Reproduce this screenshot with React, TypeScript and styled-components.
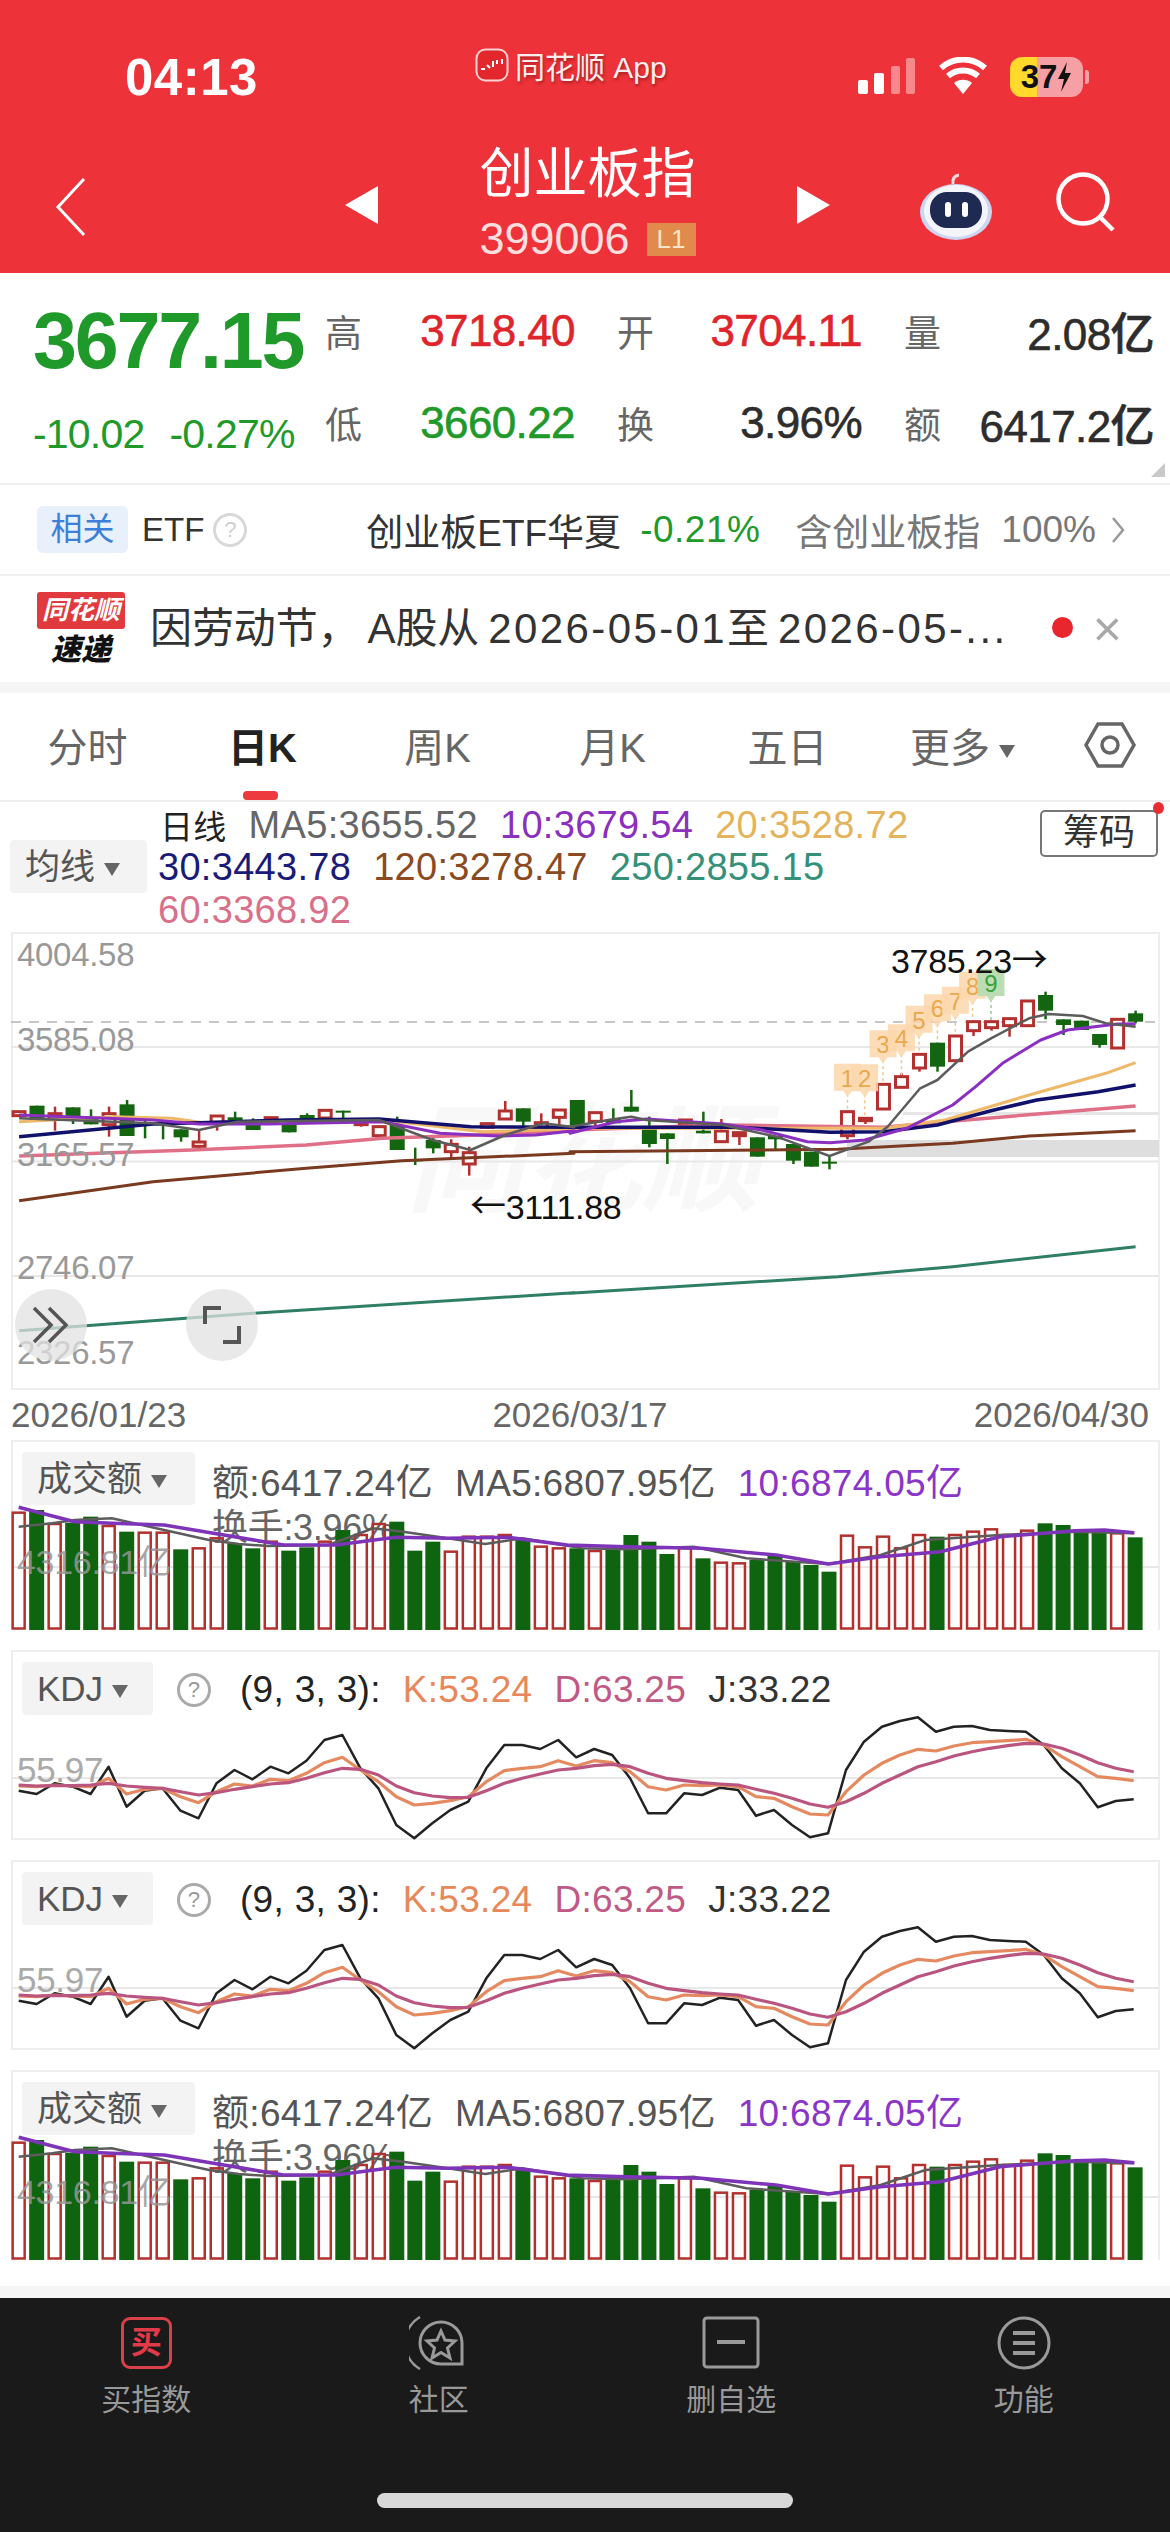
import React from "react";
import styled, { createGlobalStyle } from "styled-components";

const FONT = `"Liberation Sans", "Noto Sans CJK SC", sans-serif`;
const RED = "#e0242b";
const GREEN = "#1f9a2a";
const C_UP = "#b2302e";
const C_DOWN = "#14650f";

const GlobalStyle = createGlobalStyle`
  html, body { margin: 0; padding: 0; background: #fff; }
  body { font-family: ${FONT}; }
  * { box-sizing: border-box; }
`;

// ---- chart data. y values are kept in thirds of a pixel, like the grid of the source chart
type Pt = [number, number];
const stepX = (i: number) => 19 + 18.01 * i;
const mainY = (v: number) => 920 + v / 3;

// up, body top, body bottom, wick top, wick bottom
const candles: [boolean, number, number, number?, number?][] = [
  [true, 572, 590],
  [false, 557, 600],
  [true, 578, 600, 560, 632],
  [false, 562, 598, 562, 612],
  [false, 590, 613, 568, 613],
  [true, 578, 617, 560, 650],
  [false, 553, 648, 540, 648],
  [false, 606, 611, 600, 655],
  [false, 610, 614, 606, 658],
  [false, 628, 652, 628, 665],
  [true, 663, 682, 632, 692],
  [true, 585, 610, 585, 632],
  [false, 592, 600, 575, 605],
  [false, 600, 630, 595, 630],
  [true, 590, 610],
  [false, 610, 637],
  [false, 585, 600, 580, 600],
  [true, 568, 597],
  [false, 572, 578, 572, 597],
  [true, 605, 612, 595, 620],
  [true, 617, 650],
  [false, 615, 690, 590, 690],
  [false, 718, 722, 683, 735],
  [false, 660, 685, 650, 700],
  [true, 670, 698, 658, 718],
  [true, 695, 735, 680, 767],
  [true, 608, 625],
  [true, 570, 600, 543, 600],
  [false, 565, 605, 565, 622],
  [true, 605, 625, 580, 625],
  [true, 567, 595, 567, 615],
  [false, 540, 615],
  [true, 575, 607, 575, 630],
  [false, 597, 610, 565, 610],
  [false, 560, 575, 510, 575],
  [false, 627, 672, 590, 682],
  [false, 640, 657, 640, 732],
  [true, 597, 617],
  [false, 632, 640, 575, 640],
  [true, 630, 668, 597, 668],
  [true, 635, 650, 635, 675],
  [false, 652, 710],
  [false, 648, 658, 648, 688],
  [false, 672, 722, 672, 732],
  [false, 695, 740],
  [false, 725, 731, 708, 748],
  [true, 572, 650, 572, 658],
  [true, 592, 605, 592, 612],
  [true, 490, 570],
  [true, 467, 505, 460, 505],
  [true, 400, 447, 400, 455],
  [false, 368, 440, 368, 455],
  [true, 345, 425],
  [true, 302, 335, 302, 348],
  [true, 302, 326, 302, 332],
  [true, 293, 320, 293, 350],
  [true, 240, 320],
  [false, 225, 272, 215, 298],
  [false, 298, 315, 298, 345],
  [false, 302, 330],
  [false, 342, 375, 342, 383],
  [true, 295, 387],
  [false, 280, 305, 272, 310],
];

// the main chart lines come as two halves, left part from x=0 and right part from x=570
const half = (left: Pt[], right: Pt[]): string =>
  [
    ...left.map(([x, y]) => [x / 2.613, mainY(y)]),
    ...right.map(([x, y]) => [x / 2.613 + 570, mainY(y)]),
  ]
    .map((p) => p.map((n) => n.toFixed(1)).join(","))
    .join(" ");

const maLines: { color: string; width: number; points: string }[] = [
  {
    color: "#2f7f63",
    width: 3,
    points: half(
      [[50, 1232], [660, 1180], [1500, 1118]],
      [[0, 1120], [700, 1070], [1000, 1040], [1478, 980]]
    ),
  },
  {
    color: "#7a3a20",
    width: 3,
    points: half(
      [[50, 842], [400, 785], [800, 745], [1050, 722], [1500, 700]],
      [[0, 695], [700, 688], [1000, 670], [1200, 648], [1478, 632]]
    ),
  },
  {
    color: "#e07088",
    width: 3.5,
    points: half(
      [[50, 708], [500, 690], [800, 675], [1000, 655], [1250, 645], [1500, 632]],
      [[0, 630], [400, 615], [820, 622], [980, 605], [1478, 558]]
    ),
  },
  {
    color: "#eeb868",
    width: 3,
    points: half(
      [[50, 605], [300, 590], [450, 595], [540, 610], [800, 600], [1000, 600], [1260, 635], [1500, 627]],
      [[0, 625], [500, 625], [820, 625], [980, 600], [1200, 525], [1400, 460], [1478, 428]]
    ),
  },
  {
    color: "#11116b",
    width: 3.5,
    points: half(
      [[50, 650], [400, 612], [520, 608], [750, 600], [990, 597], [1230, 620], [1500, 622]],
      [[0, 622], [440, 622], [680, 637], [820, 635], [960, 615], [1100, 572], [1220, 540], [1380, 515], [1478, 495]]
    ),
  },
  {
    color: "#8a2fc0",
    width: 3,
    points: half(
      [[50, 585], [400, 600], [520, 612], [700, 612], [1000, 605], [1150, 640], [1300, 648], [1400, 645], [1500, 632]],
      [[0, 640], [120, 605], [200, 597], [400, 612], [500, 630], [620, 665], [680, 668], [770, 660], [880, 625], [1000, 555], [1060, 500], [1130, 430], [1230, 360], [1300, 330], [1430, 312], [1478, 312]]
    ),
  },
  {
    color: "#5c5c5c",
    width: 2.5,
    points: half(
      [[50, 595], [400, 610], [520, 630], [620, 605], [990, 600], [1060, 630], [1130, 660], [1230, 690], [1320, 645], [1420, 610], [1500, 622]],
      [[0, 620], [100, 600], [160, 590], [200, 600], [400, 615], [540, 650], [678, 708], [780, 665], [830, 620], [915, 505], [960, 480], [1040, 395], [1100, 355], [1200, 295], [1250, 282], [1340, 288], [1400, 310], [1478, 320]]
    ),
  },
];

// nine-turn markers: digit, centre x, centre y, tip y, in source units
const turns: [string, number, number, number][] = [
  ["1", 725, 476, 570],
  ["2", 770, 478, 590],
  ["3", 818, 376, 488],
  ["4", 866, 358, 465],
  ["5", 912, 302, 398],
  ["6", 960, 268, 366],
  ["7", 1007, 245, 343],
  ["8", 1052, 200, 300],
  ["9", 1100, 192, 300],
];

const volPattern = "RGRGGRGRRGRRGGRGGRGRRGGGRRRRGRRGRGGGGRGRRGGGGGRRRRRGRRRRRGGGGRG";
const volTops = [
  278, 270, 312, 308, 290, 318, 335, 338, 338, 388, 385, 355, 370, 385, 365, 392, 382, 365, 330, 345, 312,
  305, 392, 365, 395, 350, 350, 345, 360, 380, 385, 385, 393, 388, 345, 365, 402, 385, 415, 428, 430, 420,
  405, 425, 435, 455, 347, 382, 350, 385, 345, 350, 345, 335, 328, 345, 332, 310, 315, 335, 330, 340, 352,
];

const panelPath = (xs: Pt[]) =>
  xs.map(([x, y]) => `${(x / 1.34).toFixed(1)},${(1420 + y / 3).toFixed(1)}`).join(" ");

const volPurple: Pt[] = [[25, 262], [100, 305], [150, 310], [220, 315], [300, 345], [380, 375], [450, 375], [530, 352], [600, 355], [680, 352], [760, 375], [840, 380], [940, 385], [1040, 405], [1110, 432], [1180, 410], [1260, 395], [1340, 350], [1440, 332], [1480, 330], [1520, 338]];
const volGray: Pt[] = [[25, 320], [70, 310], [100, 300], [150, 295], [220, 330], [280, 360], [320, 372], [360, 378], [440, 375], [500, 325], [540, 335], [600, 355], [650, 372], [700, 355], [780, 385], [840, 388], [930, 380], [1000, 415], [1110, 432], [1180, 405], [1240, 360], [1340, 345], [1440, 335], [1520, 340]];

const kdjX = (i: number) => 25 + 24.1 * i;
const toPts = (ys: number[]): Pt[] => ys.map((y, i) => [kdjX(i), y]);
const kdjJ = toPts([1112, 1122, 1090, 1100, 1122, 1040, 1160, 1112, 1105, 1172, 1195, 1090, 1050, 1078, 1040, 1060, 1022, 960, 945, 1045, 1105, 1215, 1255, 1210, 1170, 1145, 1045, 975, 975, 987, 960, 1012, 987, 1005, 1075, 1180, 1180, 1120, 1125, 1103, 1110, 1187, 1170, 1215, 1252, 1240, 1050, 965, 920, 903, 892, 935, 920, 918, 930, 933, 935, 975, 1045, 1090, 1162, 1143, 1138]);
const kdjK = toPts([1098, 1100, 1095, 1098, 1100, 1075, 1122, 1108, 1105, 1130, 1148, 1115, 1092, 1098, 1078, 1082, 1060, 1028, 1012, 1050, 1085, 1130, 1155, 1150, 1142, 1130, 1085, 1052, 1045, 1040, 1022, 1038, 1022, 1028, 1055, 1100, 1110, 1095, 1097, 1095, 1100, 1130, 1135, 1160, 1182, 1185, 1115, 1065, 1030, 1005, 988, 993, 978, 968, 965, 962, 958, 975, 1010, 1040, 1070, 1075, 1082]);
const kdjD = toPts([1095, 1098, 1097, 1097, 1095, 1090, 1098, 1102, 1105, 1115, 1125, 1118, 1108, 1100, 1092, 1088, 1075, 1058, 1045, 1048, 1065, 1098, 1118, 1128, 1133, 1132, 1112, 1090, 1075, 1062, 1050, 1045, 1037, 1033, 1040, 1060, 1075, 1082, 1088, 1092, 1095, 1108, 1120, 1135, 1152, 1162, 1145, 1120, 1090, 1065, 1040, 1025, 1008, 995, 985, 977, 970, 972, 985, 1005, 1028, 1045, 1055]);

// ---- page
const Page = styled.div`
  width: 1170px;
  height: 2532px;
  overflow: hidden;
  display: flex;
  flex-direction: column;
  background: #fff;
`;

const Header = styled.header`
  height: 273px;
  background: #ee3239;
  color: #fff;
`;

const StatusBar = styled.div`
  height: 120px;
  display: grid;
  grid-template-columns: 340px 1fr 340px;
  padding: 0 87px 0 125px;
`;

const Time = styled.div`
  display: flex;
  align-items: center;
  padding-top: 34px;
  font-size: 51px;
  font-weight: 700;
  letter-spacing: 0.5px;
`;

const AppLabel = styled.div`
  display: flex;
  align-items: center;
  gap: 6px;
  padding-top: 10px;
  margin-left: 10px;
  font-size: 30px;
  color: #fdeeee;
  text-shadow: 1px 2px 3px rgba(110, 20, 20, 0.6);
  white-space: nowrap;
`;

const StatusIcons = styled.div`
  display: flex;
  align-items: flex-start;
  justify-content: flex-end;
  padding-top: 57px;
  gap: 22px;
`;

const Battery = styled.div`
  position: relative;
  width: 73px;
  height: 40px;
  border-radius: 12px;
  display: flex;
  align-items: center;
  justify-content: center;
  background: linear-gradient(90deg, #ffd92c 0 37%, #f6a0a6 37%);
  color: #111;
  font-size: 33px;
  font-weight: 700;
`;

const BatteryNub = styled.span`
  position: absolute;
  right: -6px;
  top: 13px;
  width: 4px;
  height: 14px;
  border-radius: 0 3px 3px 0;
  background: #f6a0a6;
`;

const NavRow = styled.div`
  height: 153px;
  display: grid;
  grid-template-columns: 345px 485px 1fr;
`;

const BackCell = styled.div`
  padding: 57px 0 0 55px;
`;

const TitleCell = styled.div`
  display: flex;
  align-items: flex-start;
  justify-content: space-between;
  padding-top: 22px;
`;

const ArrowBox = styled.div`
  margin-top: 44px;
`;

const TitleStack = styled.div`
  display: flex;
  flex-direction: column;
  align-items: center;
`;

const Title = styled.div`
  font-size: 54px;
  line-height: 64px;
`;

const CodeRow = styled.div`
  display: flex;
  align-items: center;
  gap: 17px;
  font-size: 45px;
  line-height: 44px;
  margin-top: 11px;
  color: #fbdfdf;
`;

const LevelBadge = styled.span`
  width: 49px;
  height: 33px;
  background: #e08a4c;
  color: #f6e6c8;
  font-size: 26px;
  line-height: 33px;
  text-align: center;
`;

const ToolCell = styled.div`
  display: flex;
  justify-content: flex-end;
  gap: 62px;
  padding: 52px 55px 0 0;
`;

const Quote = styled.section`
  height: 210px;
  display: grid;
  grid-template-columns: 292px 1fr;
  padding: 35px 16px 0 33px;
  position: relative;
`;

const PriceBlock = styled.div`
  display: flex;
  flex-direction: column;
`;

const Price = styled.div`
  font-size: 79px;
  font-weight: 700;
  line-height: 66px;
  letter-spacing: -2.2px;
  color: ${GREEN};
`;

const Change = styled.div`
  display: flex;
  gap: 25px;
  margin-top: 40px;
  font-size: 41px;
  line-height: 40px;
  letter-spacing: -0.8px;
  color: ${GREEN};
`;

const StatsGrid = styled.div`
  display: grid;
  grid-template-columns: 250px 245px 250px;
  column-gap: 42px;
  row-gap: 46px;
  grid-auto-rows: 46px;
`;

const Stat = styled.div`
  display: flex;
  align-items: center;
  justify-content: space-between;
  white-space: nowrap;
`;

const StatLabel = styled.span`
  font-size: 37px;
  color: #666;
`;

const StatValue = styled.span<{ $c?: string }>`
  font-size: 44px;
  font-weight: 500;
  letter-spacing: -0.6px;
  -webkit-text-stroke: 0.6px ${(p) => p.$c || "#2d2d2d"};
  color: ${(p) => p.$c || "#2d2d2d"};
`;

const Corner = styled.div`
  position: absolute;
  right: 5px;
  bottom: 6px;
  width: 0;
  height: 0;
  border-left: 14px solid transparent;
  border-bottom: 14px solid #c9c9c9;
`;

const Related = styled.section`
  height: 91px;
  border-top: 2px solid #f0f0f0;
  display: flex;
  align-items: center;
  padding: 0 45px 0 37px;
  font-size: 37px;
  white-space: nowrap;
`;

const RelatedPill = styled.span`
  width: 91px;
  height: 47px;
  background: #e8f0fb;
  border-radius: 6px;
  color: #3c7fd8;
  font-size: 32px;
  line-height: 47px;
  text-align: center;
`;

const EtfLabel = styled.span`
  margin-left: 14px;
  font-size: 33px;
  color: #333;
`;

const HelpMark = styled.span<{ $size?: number }>`
  width: ${(p) => p.$size || 34}px;
  height: ${(p) => p.$size || 34}px;
  margin-left: 9px;
  border: 3px solid #d8d8d8;
  border-radius: 50%;
  color: #cfcfcf;
  font-size: 22px;
  line-height: 28px;
  text-align: center;
`;

const PanelHelp = styled(HelpMark)`
  margin-left: 24px;
  margin-right: 7px;
  border-color: #aaa;
  color: #999;
`;

const FundName = styled.span`
  margin-left: auto;
  color: #333;
`;

const FundPct = styled.span`
  margin-left: 19px;
  letter-spacing: 0.5px;
  color: ${GREEN};
`;

const HoldLabel = styled.span`
  margin-left: 35px;
  color: #777;
`;

const HoldPct = styled.span`
  margin-left: 21px;
  margin-right: 15px;
  color: #777;
`;

const News = styled.section`
  height: 108px;
  border-top: 2px solid #f0f0f0;
  display: flex;
  align-items: center;
  padding: 0 48px 0 37px;
`;

const NewsLogo = styled.div`
  width: 88px;
  display: flex;
  flex-direction: column;
  align-items: center;
`;

const NewsTag = styled.span`
  width: 88px;
  height: 37px;
  background: #e03a3e;
  border-radius: 3px;
  color: #fff;
  font-size: 26px;
  font-weight: 700;
  font-style: italic;
  line-height: 37px;
  text-align: center;
`;

const NewsSub = styled.span`
  margin-top: 5px;
  font-size: 30px;
  line-height: 32px;
  font-weight: 900;
  font-style: italic;
  color: #111;
`;

const NewsText = styled.div`
  margin-left: 25px;
  padding-bottom: 9px;
  flex: 1;
  font-size: 42px;
  letter-spacing: -0.1px;
  color: #333;
  white-space: nowrap;
`;

const NewsMarket = styled.span`
  margin-left: 8px;
`;

const NewsDate = styled.span`
  letter-spacing: 2.4px;
  margin-left: 9px;
`;

const NewsDot = styled.span`
  width: 21px;
  height: 21px;
  margin-bottom: 3px;
  border-radius: 50%;
  background: #e8262e;
`;

const NewsClose = styled.span`
  margin-left: 20px;
  font-size: 50px;
  line-height: 42px;
  color: #a8a8a8;
`;

const Band = styled.div<{ $h: number }>`
  height: ${(p) => p.$h}px;
  background: #f5f5f5;
`;

const Tabs = styled.nav`
  height: 109px;
  border-bottom: 2px solid #eee;
  display: grid;
  grid-template-columns: repeat(6, 175px) 1fr;
  align-items: center;

  & > svg {
    justify-self: center;
    margin-top: -4px;
  }
`;

const Tab = styled.div<{ $on?: boolean }>`
  position: relative;
  height: 107px;
  line-height: 110px;
  text-align: center;
  font-size: 40px;
  color: ${(p) => (p.$on ? "#222" : "#666")};
  font-weight: ${(p) => (p.$on ? 700 : 400)};
`;

const TabMark = styled.span`
  position: absolute;
  left: 68px;
  bottom: 0;
  width: 35px;
  height: 9px;
  background: #ec3a3f;
  border-radius: 4px;
`;

const Caret = styled.span<{ $c?: string }>`
  display: inline-block;
  width: 0;
  height: 0;
  margin-left: 9px;
  vertical-align: middle;
  border-left: 8px solid transparent;
  border-right: 8px solid transparent;
  border-top: 13px solid ${(p) => p.$c || "#666"};
`;

const Legend = styled.section`
  height: 130px;
  display: flex;
  padding: 2px 12px 0 10px;
`;

const SelectBox = styled.div<{ $w: number }>`
  width: ${(p) => p.$w}px;
  height: 53px;
  background: #f3f3f3;
  border-radius: 4px;
  color: #555;
  font-size: 35px;
  line-height: 53px;
  padding-left: 15px;
  white-space: nowrap;
`;

const LegendSelect = styled(SelectBox)`
  align-self: center;
  margin-right: 11px;
  margin-top: -4px;
`;

const LegendLines = styled.div`
  display: flex;
  flex-direction: column;
`;

const LegendLine = styled.div`
  height: 42.5px;
  display: flex;
  align-items: center;
  gap: 22px;
  font-size: 38px;
  letter-spacing: 0.3px;
  white-space: nowrap;
`;

const LegendTitle = styled.span`
  font-size: 33px;
  margin-left: 2px;
  color: #222;
`;

const Reading = styled.span<{ $c: string }>`
  color: ${(p) => p.$c};
`;

const ChipButton = styled.div`
  position: relative;
  width: 118px;
  height: 47px;
  margin: 6px 0 0 auto;
  border: 2px solid #777;
  border-radius: 5px;
  font-size: 36px;
  line-height: 42px;
  text-align: center;
  color: #333;
`;

const ChipDot = styled.span`
  position: absolute;
  top: -10px;
  right: -8px;
  width: 11px;
  height: 12px;
  border-radius: 50%;
  background: #ea2b33;
`;

const MainChart = styled.div`
  position: relative;
  width: 1149px;
  height: 458px;
  margin-left: 11px;
  box-shadow: inset 0 0 0 2px #eee;
`;

const Plot = styled.svg`
  position: relative;
  display: block;
  width: 100%;
  height: 100%;
`;

const AxisLabel = styled.span<{ $y: number; $left?: number; $c?: string; $size?: number }>`
  position: absolute;
  left: ${(p) => p.$left ?? 6}px;
  top: ${(p) => p.$y}px;
  font-size: ${(p) => p.$size ?? 33}px;
  line-height: 34px;
  letter-spacing: -0.3px;
  color: ${(p) => p.$c || "#999"};
  white-space: nowrap;
`;

const Extreme = styled.span<{ $x: number; $y: number }>`
  position: absolute;
  left: ${(p) => p.$x}px;
  top: ${(p) => p.$y}px;
  font-size: 34px;
  line-height: 36px;
  letter-spacing: -0.3px;
  color: #111;
  white-space: nowrap;
`;

const ExtremeArrow = styled.span`
  font-family: "Noto Sans CJK SC", sans-serif;
  font-size: 36px;
`;

const Watermark = styled.span`
  position: absolute;
  left: 395px;
  top: 170px;
  font-size: 118px;
  line-height: 118px;
  font-weight: 700;
  font-style: italic;
  color: #f8f8f8;
`;

const RoundButton = styled.span<{ $x: number }>`
  position: absolute;
  left: ${(p) => p.$x}px;
  top: 357px;
  width: 72px;
  height: 72px;
  border-radius: 50%;
  background: rgba(226, 226, 226, 0.75);
  display: flex;
  align-items: center;
  justify-content: center;
`;

const Dates = styled.div`
  height: 50px;
  display: flex;
  align-items: center;
  justify-content: space-between;
  padding: 0 21px 0 11px;
  font-size: 35px;
  color: #666;
`;

const Panels = styled.div`
  display: flex;
  flex-direction: column;
  gap: 20px;
  margin-left: 11px;
`;

const Panel = styled.div<{ $closed?: boolean }>`
  position: relative;
  width: 1149px;
  height: 190px;
  box-shadow: inset 0 2px 0 #eee, inset 2px 0 0 #eee, inset -2px 0 0 #eee
    ${(p) => (p.$closed ? ", inset 0 -2px 0 #eee" : "")};
`;

const PanelHead = styled.div`
  position: absolute;
  left: 11px;
  top: 12px;
  display: flex;
  align-items: flex-start;
`;

const PanelReadings = styled.div<{ $indent?: number }>`
  display: flex;
  align-items: center;
  height: 56px;
  margin-left: ${(p) => p.$indent ?? 0}px;
  gap: 22px;
  font-size: 37px;
  letter-spacing: 0.3px;
  white-space: nowrap;
`;

const Footer = styled.div`
  margin-top: 26px;
`;

const BottomNav = styled.nav`
  height: 234px;
  background: #1a1a1a;
  display: grid;
  grid-template-columns: repeat(4, 1fr);
  grid-template-rows: 126px 1fr;
`;

const NavItem = styled.div`
  display: flex;
  flex-direction: column;
  align-items: center;
  padding-top: 18px;
  color: #999;
  font-size: 30px;
  line-height: 34px;
`;

const NavIconBox = styled.div`
  height: 53px;
  margin-bottom: 14px;
  display: flex;
  align-items: center;
`;

const BuyIcon = styled.div`
  width: 51px;
  height: 52px;
  border: 3px solid #d8404a;
  border-radius: 9px;
  color: #e23a48;
  font-size: 31px;
  font-weight: 700;
  line-height: 45px;
  text-align: center;
`;

const HomeLine = styled.div`
  grid-column: 1 / -1;
  justify-self: center;
  margin-top: 69px;
  width: 416px;
  height: 15px;
  border-radius: 8px;
  background: #d8d8d8;
`;

// ---- drawn icons
const Signal = () => (
  <svg width="60" height="38" viewBox="0 0 60 38">
    <rect x="2" y="23" width="10" height="14" rx="2" fill="#fff" />
    <rect x="18" y="16" width="10" height="21" rx="2" fill="#fff" />
    <rect x="35" y="9" width="9" height="28" rx="2" fill="#f7888c" />
    <rect x="50" y="1" width="9" height="36" rx="2" fill="#f7888c" />
  </svg>
);

const Wifi = () => (
  <svg width="50" height="38" viewBox="0 0 50 38">
    <path d="M25 37 L16 26 a14 14 0 0 1 18 0 Z" fill="#fff" />
    <path d="M10 19 a23 23 0 0 1 30 0" fill="none" stroke="#fff" strokeWidth="6" />
    <path d="M3 11 a33 33 0 0 1 44 0" fill="none" stroke="#fff" strokeWidth="6" />
  </svg>
);

const Bolt = () => (
  <svg width="15" height="30" viewBox="0 0 15 30">
    <path d="M10 0 L1 17 H7 L4 30 L14 11 H8 Z" fill="#111" />
  </svg>
);

const AppIcon = () => (
  <svg width="34" height="34" viewBox="0 0 34 34">
    <rect x="1.5" y="1.5" width="31" height="31" rx="9" fill="#e2272d" stroke="#fbd3d3" strokeWidth="2" />
    <path d="M6 21 h4 M12 17 l3 3 M18 13 v6 M22 12 v4 M27 11 v5" stroke="#fff" strokeWidth="2" />
  </svg>
);

const Back = () => (
  <svg width="32" height="60" viewBox="0 0 32 60">
    <path d="M29 2 L3 30 L29 58" fill="none" stroke="#fff" strokeWidth="3" />
  </svg>
);

const Arrow = ({ right }: { right?: boolean }) => (
  <ArrowBox>
    <svg width="33" height="38" viewBox="0 0 33 38">
      <path d={right ? "M0 0 L33 19 L0 38 Z" : "M33 0 L0 19 L33 38 Z"} fill="#fff" />
    </svg>
  </ArrowBox>
);

const Robot = () => (
  <svg width="73" height="68" viewBox="0 0 73 68">
    <path d="M33 12 q-1 -8 6 -9" fill="none" stroke="#f6d8dc" strokeWidth="3" />
    <ellipse cx="36" cy="40" rx="36" ry="28" fill="#ccd6f2" />
    <ellipse cx="36" cy="39" rx="32" ry="26" fill="#f4f5fb" />
    <rect x="10" y="20" width="52" height="36" rx="17" fill="#1e2a52" />
    <rect x="25" y="30" width="6" height="15" rx="3" fill="#fff" />
    <rect x="42" y="30" width="6" height="15" rx="3" fill="#fff" />
  </svg>
);

const Search = () => (
  <svg width="60" height="60" viewBox="0 0 60 60">
    <circle cx="28" cy="27" r="24.5" fill="none" stroke="#fff" strokeWidth="4.5" />
    <path d="M45 45 L58 58" stroke="#fff" strokeWidth="4.5" />
  </svg>
);

const HexIcon = () => (
  <svg width="52" height="46" viewBox="0 0 52 46">
    <path d="M14 2 H38 L50 23 L38 44 H14 L2 23 Z" fill="none" stroke="#666" strokeWidth="3.5" />
    <circle cx="26" cy="23" r="8" fill="none" stroke="#666" strokeWidth="3.5" />
  </svg>
);

const SmallChevron = () => (
  <svg width="14" height="28" viewBox="0 0 14 28">
    <path d="M2 2 L12 14 L2 26" fill="none" stroke="#999" strokeWidth="2.5" />
  </svg>
);

const DoubleChevron = () => (
  <svg width="40" height="40" viewBox="0 0 40 40">
    <path d="M3 3 L20 20 L3 37 M18 3 L35 20 L18 37" fill="none" stroke="#555" strokeWidth="3.5" />
  </svg>
);

const Expand = () => (
  <svg width="38" height="38" viewBox="0 0 38 38">
    <path d="M2 18 V2 H18 M36 20 V36 H20" fill="none" stroke="#555" strokeWidth="4" />
  </svg>
);

const CommunityIcon = () => (
  <svg width="60" height="54" viewBox="0 0 60 54">
    <path d="M11 1 a30 30 0 0 0 0 52" fill="none" stroke="#9a9a9a" strokeWidth="2.5" />
    <path d="M32 6 a21 21 0 0 1 21 21 V48 H32 a21 21 0 0 1 0 -42 Z" fill="none" stroke="#9a9a9a" strokeWidth="3" />
    <path d="M32 15 l4 9 10 1 -7.5 7 2.5 10 -9 -5.5 -9 5.5 2.5 -10 -7.5 -7 10 -1 Z" fill="none" stroke="#9a9a9a" strokeWidth="3" />
  </svg>
);

const UnfollowIcon = () => (
  <svg width="58" height="53" viewBox="0 0 58 53">
    <rect x="2" y="2" width="54" height="49" rx="3" fill="none" stroke="#9a9a9a" strokeWidth="3" />
    <path d="M15 26 H43" stroke="#9a9a9a" strokeWidth="4" />
  </svg>
);

const MenuIcon = () => (
  <svg width="54" height="54" viewBox="0 0 54 54">
    <circle cx="27" cy="27" r="25" fill="none" stroke="#9a9a9a" strokeWidth="3" />
    <path d="M16 17 H38 M16 27 H38 M16 37 H38" stroke="#9a9a9a" strokeWidth="4" />
  </svg>
);

// ---- chart parts
const CandleChart = () => (
  <Plot viewBox="11 932 1149 458">
    <path d="M11 1047 H1159 M11 1161.5 H1159 M11 1276 H1159" stroke="#e8e8e8" strokeWidth="2" />
    <path d="M11 1022 H1159" stroke="#b5b5b5" strokeWidth="1.5" strokeDasharray="10 8" />
    <rect x="847" y="1140" width="312" height="17" fill="#dedede" />
    <rect x="903" y="1112" width="256" height="3" fill="#e6e6e6" />
    {candles.map(([up, top, bottom, wTop, wBottom], i) => {
      const x = stepX(i);
      const c = up ? C_UP : C_DOWN;
      const y1 = mainY(top);
      const y2 = mainY(bottom);
      return (
        <g key={i}>
          <path d={`M${x} ${mainY(wTop ?? top)} V${mainY(wBottom ?? bottom)}`} stroke={c} strokeWidth="2.5" />
          <rect
            x={x - (up ? 6 : 7.5)}
            y={up ? y1 + 1 : y1}
            width={up ? 12 : 15}
            height={Math.max(up ? y2 - y1 - 2 : y2 - y1, 2)}
            fill={up ? "#fff" : c}
            stroke={up ? c : "none"}
            strokeWidth="3"
          />
        </g>
      );
    })}
    {maLines.map((l) => (
      <polyline key={l.color} points={l.points} fill="none" stroke={l.color} strokeWidth={l.width} strokeLinejoin="round" />
    ))}
    {turns.map(([digit, zx, zy, tip]) => {
      const x = zx / 2.613 + 570;
      const y = mainY(zy);
      const isNine = digit === "9";
      const fill = isNine ? "#bcdcb4" : "#fbd7ac";
      return (
        <g key={digit}>
          <path d={`M${x} ${y + 15} V${mainY(tip)}`} stroke={isNine ? "#9cc89a" : "#f3c48e"} strokeWidth="1.5" strokeDasharray="3 3" />
          <path
            d={`M${x - 13.5} ${y - 15} h27 v27 l-9 0 -4.5 6 -4.5 -6 h-9 Z`}
            fill={fill}
            fillOpacity={isNine ? 1 : 0.85}
          />
          <text x={x} y={y + 8} textAnchor="middle" fontSize="24" fill={isNine ? "#35a33a" : "#eaa84e"} fontFamily="Liberation Sans">
            {digit}
          </text>
        </g>
      );
    })}
  </Plot>
);

const VolumeChart = () => (
  <Plot viewBox="11 1440 1149 190">
    <path d="M11 1567 H1159" stroke="#e8e8e8" strokeWidth="2" />
    {volTops.map((t, i) => {
      const x = (25 + 24.13 * i) / 1.34;
      const y = 1420 + t / 3;
      const up = volPattern[i] === "R";
      return up ? (
        <rect key={i} x={x - 6} y={y} width="12" height={1628.5 - y} fill="#fff" fillOpacity="0" stroke={C_UP} strokeWidth="2.5" />
      ) : (
        <rect key={i} x={x - 7.5} y={y} width="15" height={1630 - y} fill="#0f650f" />
      );
    })}
    <polyline points={panelPath(volGray)} fill="none" stroke="#5c5c5c" strokeWidth="2.5" />
    <polyline points={panelPath(volPurple)} fill="none" stroke="#7e34b8" strokeWidth="3.5" strokeLinejoin="round" />
  </Plot>
);

const KdjChart = () => (
  <Plot viewBox="11 1650 1149 190">
    <path d="M11 1778 H1159" stroke="#e8e8e8" strokeWidth="2" />
    <polyline points={panelPath(kdjJ)} fill="none" stroke="#222" strokeWidth="2.5" strokeLinejoin="round" />
    <polyline points={panelPath(kdjK)} fill="none" stroke="#e58a60" strokeWidth="3.2" strokeLinejoin="round" />
    <polyline points={panelPath(kdjD)} fill="none" stroke="#b9557f" strokeWidth="3.2" strokeLinejoin="round" />
  </Plot>
);

const VolumePanel = () => (
  <Panel>
    <AxisLabel $left={201} $y={71} $c="#666" $size={36}>换手:3.96%</AxisLabel>
    <VolumeChart />
    <AxisLabel $y={105} $c="rgba(150,150,150,0.85)" $size={34}>4316.81亿</AxisLabel>
    <PanelHead>
      <SelectBox $w={173}>成交额<Caret $c="#666" /></SelectBox>
      <PanelReadings $indent={17}>
        <Reading $c="#555">额:6417.24亿</Reading>
        <Reading $c="#555">MA5:6807.95亿</Reading>
        <Reading $c="#8a35c8">10:6874.05亿</Reading>
      </PanelReadings>
    </PanelHead>
  </Panel>
);

const KdjPanel = () => (
  <Panel $closed>
    <KdjChart />
    <AxisLabel $y={103} $c="#aaa" $size={35}>55.97</AxisLabel>
    <PanelHead>
      <SelectBox $w={131}>KDJ<Caret $c="#666" /></SelectBox>
      <PanelReadings>
        <PanelHelp>?</PanelHelp>
        <Reading $c="#222">(9, 3, 3):</Reading>
        <Reading $c="#e8875a">K:53.24</Reading>
        <Reading $c="#c05a85">D:63.25</Reading>
        <Reading $c="#333">J:33.22</Reading>
      </PanelReadings>
    </PanelHead>
  </Panel>
);

const App: React.FC = () => (
  <Page>
    <GlobalStyle />
    <Header>
      <StatusBar>
        <Time>04:13</Time>
        <AppLabel>
          <AppIcon />
          同花顺 App
        </AppLabel>
        <StatusIcons>
          <Signal />
          <Wifi />
          <Battery>
            37
            <Bolt />
            <BatteryNub />
          </Battery>
        </StatusIcons>
      </StatusBar>
      <NavRow>
        <BackCell>
          <Back />
        </BackCell>
        <TitleCell>
          <Arrow />
          <TitleStack>
            <Title>创业板指</Title>
            <CodeRow>
              399006
              <LevelBadge>L1</LevelBadge>
            </CodeRow>
          </TitleStack>
          <Arrow right />
        </TitleCell>
        <ToolCell>
          <Robot />
          <Search />
        </ToolCell>
      </NavRow>
    </Header>

    <Quote>
      <PriceBlock>
        <Price>3677.15</Price>
        <Change>
          <span>-10.02</span>
          <span>-0.27%</span>
        </Change>
      </PriceBlock>
      <StatsGrid>
        <Stat>
          <StatLabel>高</StatLabel>
          <StatValue $c={RED}>3718.40</StatValue>
        </Stat>
        <Stat>
          <StatLabel>开</StatLabel>
          <StatValue $c={RED}>3704.11</StatValue>
        </Stat>
        <Stat>
          <StatLabel>量</StatLabel>
          <StatValue>2.08亿</StatValue>
        </Stat>
        <Stat>
          <StatLabel>低</StatLabel>
          <StatValue $c={GREEN}>3660.22</StatValue>
        </Stat>
        <Stat>
          <StatLabel>换</StatLabel>
          <StatValue>3.96%</StatValue>
        </Stat>
        <Stat>
          <StatLabel>额</StatLabel>
          <StatValue>6417.2亿</StatValue>
        </Stat>
      </StatsGrid>
      <Corner />
    </Quote>

    <Related>
      <RelatedPill>相关</RelatedPill>
      <EtfLabel>ETF</EtfLabel>
      <HelpMark>?</HelpMark>
      <FundName>创业板ETF华夏</FundName>
      <FundPct>-0.21%</FundPct>
      <HoldLabel>含创业板指</HoldLabel>
      <HoldPct>100%</HoldPct>
      <SmallChevron />
    </Related>

    <News>
      <NewsLogo>
        <NewsTag>同花顺</NewsTag>
        <NewsSub>速递</NewsSub>
      </NewsLogo>
      <NewsText>
        因劳动节，<NewsMarket>A股从</NewsMarket>
        <NewsDate>2026-05-01</NewsDate>至<NewsDate>2026-05-...</NewsDate>
      </NewsText>
      <NewsDot />
      <NewsClose>×</NewsClose>
    </News>

    <Band $h={11} />

    <Tabs>
      <Tab>分时</Tab>
      <Tab $on>
        日K
        <TabMark />
      </Tab>
      <Tab>周K</Tab>
      <Tab>月K</Tab>
      <Tab>五日</Tab>
      <Tab>
        更多
        <Caret />
      </Tab>
      <HexIcon />
    </Tabs>

    <Legend>
      <LegendSelect $w={137}>
        均线
        <Caret $c="#666" />
      </LegendSelect>
      <LegendLines>
        <LegendLine>
          <LegendTitle>日线</LegendTitle>
          <Reading $c="#666">MA5:3655.52</Reading>
          <Reading $c="#8a2fc0">10:3679.54</Reading>
          <Reading $c="#e3b45c">20:3528.72</Reading>
        </LegendLine>
        <LegendLine>
          <Reading $c="#1a1a78">30:3443.78</Reading>
          <Reading $c="#8a4a22">120:3278.47</Reading>
          <Reading $c="#35907a">250:2855.15</Reading>
        </LegendLine>
        <LegendLine>
          <Reading $c="#d8708a">60:3368.92</Reading>
        </LegendLine>
      </LegendLines>
      <ChipButton>
        筹码
        <ChipDot />
      </ChipButton>
    </Legend>

    <MainChart>
      <Watermark>同花顺</Watermark>
      <CandleChart />
      <AxisLabel $y={6}>4004.58</AxisLabel>
      <AxisLabel $y={91}>3585.08</AxisLabel>
      <AxisLabel $y={206}>3165.57</AxisLabel>
      <AxisLabel $y={319}>2746.07</AxisLabel>
      <AxisLabel $y={404}>2326.57</AxisLabel>
      <Extreme $x={880} $y={7}>
        3785.23
        <ExtremeArrow>→</ExtremeArrow>
      </Extreme>
      <Extreme $x={459} $y={253}>
        <ExtremeArrow>←</ExtremeArrow>
        3111.88
      </Extreme>
      <RoundButton $x={4}>
        <DoubleChevron />
      </RoundButton>
      <RoundButton $x={175}>
        <Expand />
      </RoundButton>
    </MainChart>

    <Dates>
      <span>2026/01/23</span>
      <span>2026/03/17</span>
      <span>2026/04/30</span>
    </Dates>

    <Panels>
      <VolumePanel />
      <KdjPanel />
      <KdjPanel />
      <VolumePanel />
    </Panels>

    <Footer>
      <Band $h={12} />
      <BottomNav>
        <NavItem>
          <NavIconBox>
            <BuyIcon>买</BuyIcon>
          </NavIconBox>
          买指数
        </NavItem>
        <NavItem>
          <NavIconBox>
            <CommunityIcon />
          </NavIconBox>
          社区
        </NavItem>
        <NavItem>
          <NavIconBox>
            <UnfollowIcon />
          </NavIconBox>
          删自选
        </NavItem>
        <NavItem>
          <NavIconBox>
            <MenuIcon />
          </NavIconBox>
          功能
        </NavItem>
        <HomeLine />
      </BottomNav>
    </Footer>
  </Page>
);

export default App;
